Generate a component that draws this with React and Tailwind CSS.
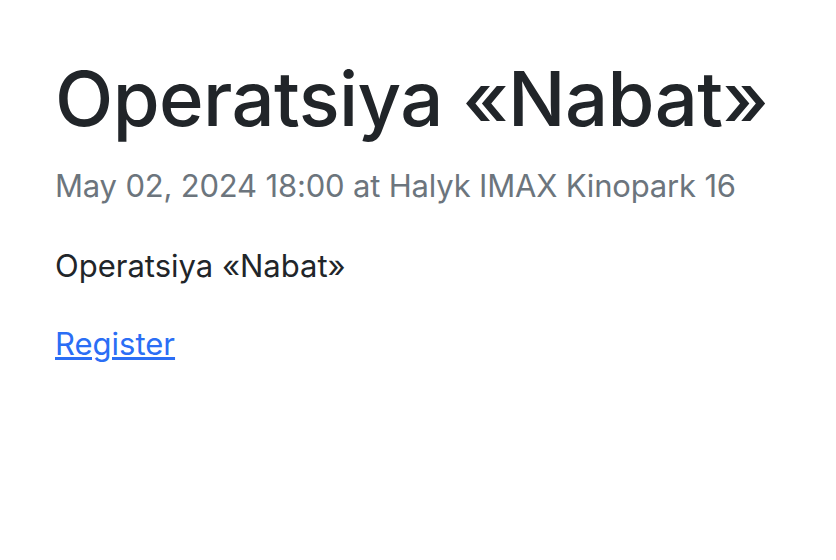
export default function App() {
  return (
    <div className="min-h-screen bg-white font-['Inter',sans-serif]">
      <div className="px-[55px] pt-[50px]">
        <h1 className="whitespace-nowrap text-[76px] leading-[96px] font-medium tracking-[-0.6px] text-[#212529]">
          Operatsiya «Nabat»
        </h1>
        <p className="mt-[16px] text-[31px] leading-[48px] tracking-[-0.18px] text-[#6c757d]">
          May 02, 2024 18:00 at Halyk IMAX Kinopark 16
        </p>
        <p className="mt-[32px] text-[31px] leading-[48px] text-[#212529]">
          Operatsiya «Nabat»
        </p>
        <p className="mt-[30px] text-[31px] leading-[48px]">
          <a href="#" className="text-[#2b6ef5] underline">
            Register
          </a>
        </p>
      </div>
    </div>
  )
}
